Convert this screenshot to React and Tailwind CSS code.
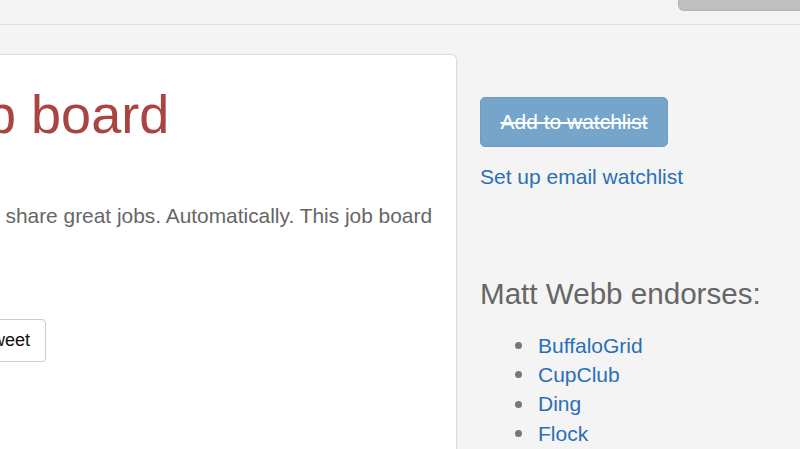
export default function App() {
  const endorsed = ["BuffaloGrid", "CupClub", "Ding", "Flock", "Hirestream"];

  return (
    <div
      className="w-[800px] h-[449px] overflow-hidden bg-[#f4f4f4] text-[#666]"
      style={{ fontFamily: '"Liberation Sans", Arial, sans-serif' }}
    >
      {/* Top bar */}
      <div className="h-[25px] flex justify-end items-start border-b border-[#e0e0e0]">
        <div className="w-[122px] h-[11px] bg-[#bfbfbf] border-l border-b border-[#b3b3b3] rounded-bl-[6px]" />
      </div>

      <div className="flex items-start pt-[29px]">
        {/* Main card */}
        <div className="-ml-[100px] w-[557px] h-[460px] shrink-0 bg-white border border-[#dcdcdc] rounded-[6px] shadow-[0_0_2px_rgba(0,0,0,0.06)] pl-[31px]">
          <h1 className="mt-[30px] -ml-[3px] text-[54px] leading-[1.1] text-[#a94442] whitespace-nowrap">
            Job board
          </h1>
          <p className="mt-[57px] -ml-[2px] text-[20.9px] leading-[30px] text-[#666] whitespace-nowrap">
            Friends share great jobs. Automatically. This job board
          </p>
          <button className="mt-[88px] w-[114px] h-[43px] flex items-center justify-end pr-[15px] bg-white border border-[#cccccc] rounded-[4px] text-[18px] text-[#111]">
            Tweet
          </button>
        </div>

        {/* Right column */}
        <div className="ml-[23px] flex flex-col items-start pt-[43px]">
          <button className="w-[188px] h-[50px] rounded-[5px] bg-[#76a5cc] border border-[#6f9bc1] text-white text-[21px] line-through">
            Add to watchlist
          </button>
          <a className="mt-[15px] text-[21px] leading-[30px] text-[#2b6fb6]">
            Set up email watchlist
          </a>

          <h3 className="mt-[86px] text-[29.6px] leading-[1.1] text-[#666] whitespace-nowrap">
            Matt Webb endorses:
          </h3>
          <ul className="mt-[20px] pl-[35px]">
            {endorsed.map((name) => (
              <li key={name} className="flex items-center text-[21px] leading-[29.4px]">
                <span className="w-[7px] h-[7px] rounded-full bg-[#777] mr-[16px]" />
                <a className="text-[#2b6fb6]">{name}</a>
              </li>
            ))}
          </ul>
        </div>
      </div>
    </div>
  );
}
